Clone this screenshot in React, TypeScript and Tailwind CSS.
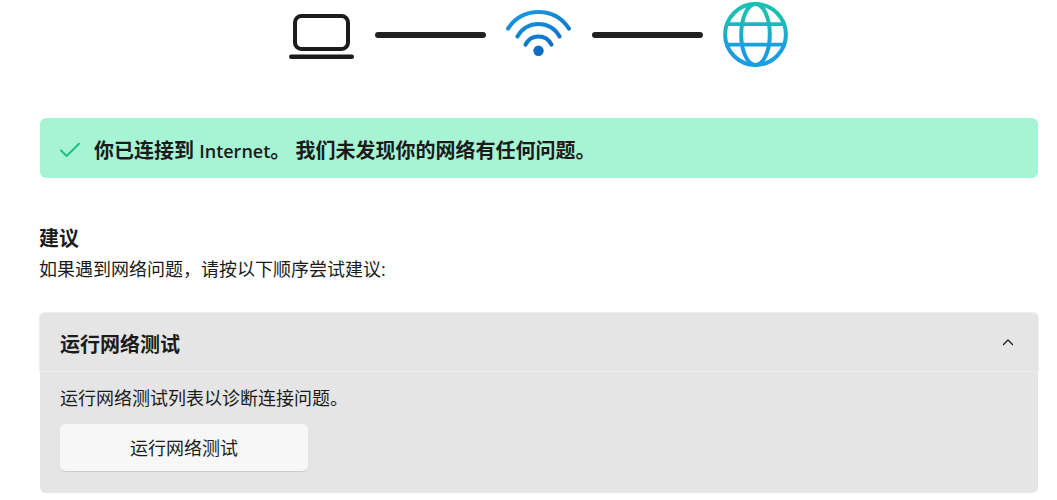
import { useState } from "react";

function LaptopIcon() {
    return (
        <svg viewBox="0 0 66 66" className="h-[66px] w-[66px] shrink-0" fill="none" stroke="#1b1b1b" aria-hidden="true">
            <rect x="6" y="14" width="53" height="33" rx="6.5" strokeWidth="4" />
            <path d="M2.2 54.8H62.8" strokeWidth="4.4" strokeLinecap="round" />
        </svg>
    );
}

function WifiIcon() {
    return (
        <svg viewBox="0 0 66 66" className="h-[66px] w-[66px] shrink-0" fill="none" aria-hidden="true">
            <defs>
                <linearGradient id="wifi" gradientUnits="userSpaceOnUse" x1="20" y1="8" x2="34" y2="54">
                    <stop offset="0" stopColor="#1b97de" />
                    <stop offset="1" stopColor="#0a69c4" />
                </linearGradient>
            </defs>
            <g stroke="url(#wifi)" strokeWidth="4" strokeLinecap="round">
                <path d="M2 26.6C9 16 20 10 32.5 10S56 16 63 26.6" />
                <path d="M11.4 34.6C16 26.5 23.6 22 32.5 22S49 26.5 53.6 34.6" />
                <path d="M19.5 42.6C22 37.5 26.5 34.4 32.5 34.4S43 37.5 45.5 42.6" />
            </g>
            <circle cx="32.5" cy="48.8" r="5.2" fill="url(#wifi)" />
        </svg>
    );
}

function GlobeIcon() {
    return (
        <svg viewBox="0 0 66 66" className="h-[66px] w-[66px] shrink-0" fill="none" aria-hidden="true">
            <defs>
                <linearGradient id="globe" gradientUnits="userSpaceOnUse" x1="0" y1="16" x2="0" y2="46">
                    <stop offset="0" stopColor="#1abfb4" />
                    <stop offset="1" stopColor="#1b9de2" />
                </linearGradient>
            </defs>
            <g stroke="url(#globe)" strokeWidth="4">
                <circle cx="32.5" cy="32.5" r="30.4" />
                <ellipse cx="32.5" cy="32.5" rx="14.3" ry="30.4" />
                <path d="M4 22.1H61M4 42.6H61" strokeWidth="3.8" />
            </g>
        </svg>
    );
}

function Connector() {
    return <div className="h-1.5 w-[111px] rounded-full bg-[#212121]" />;
}

export default function App() {
    const [open, setOpen] = useState(true);

    return (
        <main className="pt-0.5 pr-[18px] pb-[7px] pl-[39px] font-['Open_Sans','Noto_Sans_CJK_SC',sans-serif] text-[#1b1b1b]">
            {/* Device -> Wi-Fi -> Internet */}
            <div className="flex items-center justify-center gap-5">
                <LaptopIcon />
                <Connector />
                <WifiIcon />
                <Connector />
                <GlobeIcon />
            </div>

            <div role="status" className="mx-px mt-[50px] flex h-[60px] items-center gap-3.5 rounded-md bg-[#a6f4d3] px-5 pt-1">
                <svg viewBox="0 0 20 16" className="h-4 w-5 shrink-0" fill="none" stroke="#1ec27e" strokeWidth="2" strokeLinecap="round" strokeLinejoin="round" aria-hidden="true">
                    <path d="M1 8.5L6.6 14L19 1.8" />
                </svg>
                <p className="pt-0.5 text-xl leading-7 font-bold">
                    你已连接到 <span className="text-lg font-semibold">Internet</span>。 我们未发现你的网络有任何问题。
                </p>
            </div>

            <section className="mt-[47px]">
                <h2 className="text-xl leading-7 font-bold">建议</h2>
                <p className="mt-0.5 text-lg leading-7">如果遇到网络问题，请按以下顺序尝试建议:</p>
            </section>

            <section className="mt-[29px]">
                <h3>
                    <button
                        type="button"
                        aria-expanded={open}
                        aria-controls="network-test"
                        onClick={() => setOpen(!open)}
                        className="flex h-[60px] w-full items-center justify-between rounded-t-md border border-[#ededed] bg-[#e5e5e5] pr-6 pl-5 text-left"
                    >
                        <span className="pt-1.5 text-xl leading-7 font-bold">运行网络测试</span>
                        <svg viewBox="0 0 12 8" className={open ? "h-2 w-3" : "h-2 w-3 rotate-180"} fill="none" stroke="#1b1b1b" strokeWidth="1.3" strokeLinecap="round" strokeLinejoin="round" aria-hidden="true">
                            <path d="M1.5 6.5L6 2L10.5 6.5" />
                        </svg>
                    </button>
                </h3>
                {open && (
                    <div id="network-test" className="mx-px rounded-b-md bg-[#e5e5e5] px-5 pt-3 pb-[21px]">
                        <p className="text-lg leading-7">运行网络测试列表以诊断连接问题。</p>
                        <button type="button" className="mt-3 h-12 w-62 rounded-md border-b border-[#cccccc] bg-[#f7f7f7] text-lg leading-7">
                            运行网络测试
                        </button>
                    </div>
                )}
            </section>
        </main>
    );
}
